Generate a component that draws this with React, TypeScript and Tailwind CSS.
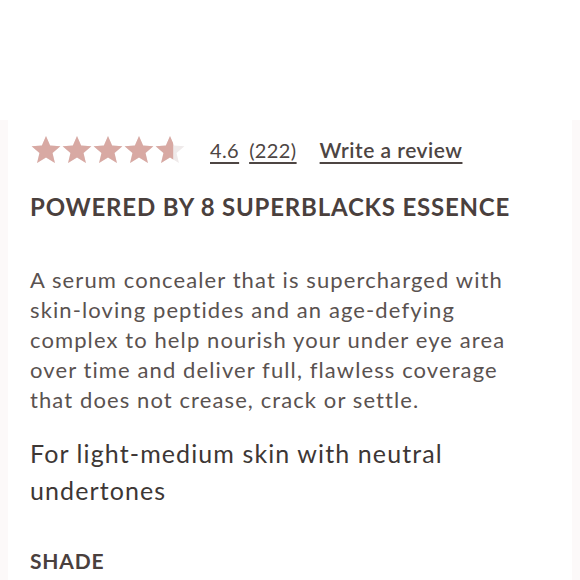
import React from 'react';

const Star = ({ fill = 1 }: { fill?: number }) => {
  const id = `clip-${Math.round(fill * 100)}`;
  const d = 'M12 1.5l3.1 7.1 7.7.6-5.9 5 1.8 7.5L12 17.7l-6.7 4 1.8-7.5-5.9-5 7.7-.6z';
  return (
    <svg viewBox="0 0 24 24" className="w-[32px] h-[32px] -mr-[1px]">
      <defs>
        <clipPath id={id}>
          <rect x="0" y="0" width={24 * fill} height="24" />
        </clipPath>
      </defs>
      <path d={d} fill="#efeaea" />
      <path d={d} fill="#d8a9a3" clipPath={`url(#${id})`} />
    </svg>
  );
};

export default function App() {
  return (
    <div className="w-[580px] h-[580px] bg-white overflow-hidden" style={{ fontFamily: 'Lato, "Open Sans", sans-serif' }}>
      <div className="h-[120px]" />
      <div className="bg-[#fcf9f9] px-[8px] h-[460px]">
        <div className="bg-white h-full px-[22px] pt-[14px]">
          <div className="flex items-center">
            <div className="flex items-center">
              <Star />
              <Star />
              <Star />
              <Star />
              <Star fill={0.6} />
            </div>
            <a className="ml-[25px] text-[20px] tracking-[0.4px] text-[#4d4543] underline underline-offset-[4px] decoration-[1.5px]">4.6</a>
            <a className="ml-[10px] text-[20px] tracking-[0.4px] text-[#4d4543] underline underline-offset-[4px] decoration-[1.5px]">(222)</a>
            <a className="ml-[23px] text-[21px] font-semibold tracking-[0.5px] text-[#4d4543] underline underline-offset-[4px] decoration-[1.5px]">Write a review</a>
          </div>
          <h2 className="mt-[26px] text-[24px] font-bold tracking-[0.8px] text-[#4a403d] leading-[30px]">
            POWERED BY 8 SUPERBLACKS ESSENCE
          </h2>
          <p className="mt-[43px] w-[485px] text-[22px] leading-[30px] tracking-[1.1px] text-[#5a5250]">
            A serum concealer that is supercharged with skin-loving peptides and an age-defying complex to help nourish your under eye area over time and deliver full, flawless coverage that does not crease, crack or settle.
          </p>
          <p className="mt-[20px] w-[450px] text-[25px] leading-[37px] tracking-[1.1px] text-[#3d3735]">
            For light-medium skin with neutral undertones
          </p>
          <h3 className="mt-[36px] text-[21px] font-bold tracking-[0.8px] text-[#4a403d]">SHADE</h3>
        </div>
      </div>
    </div>
  );
}
